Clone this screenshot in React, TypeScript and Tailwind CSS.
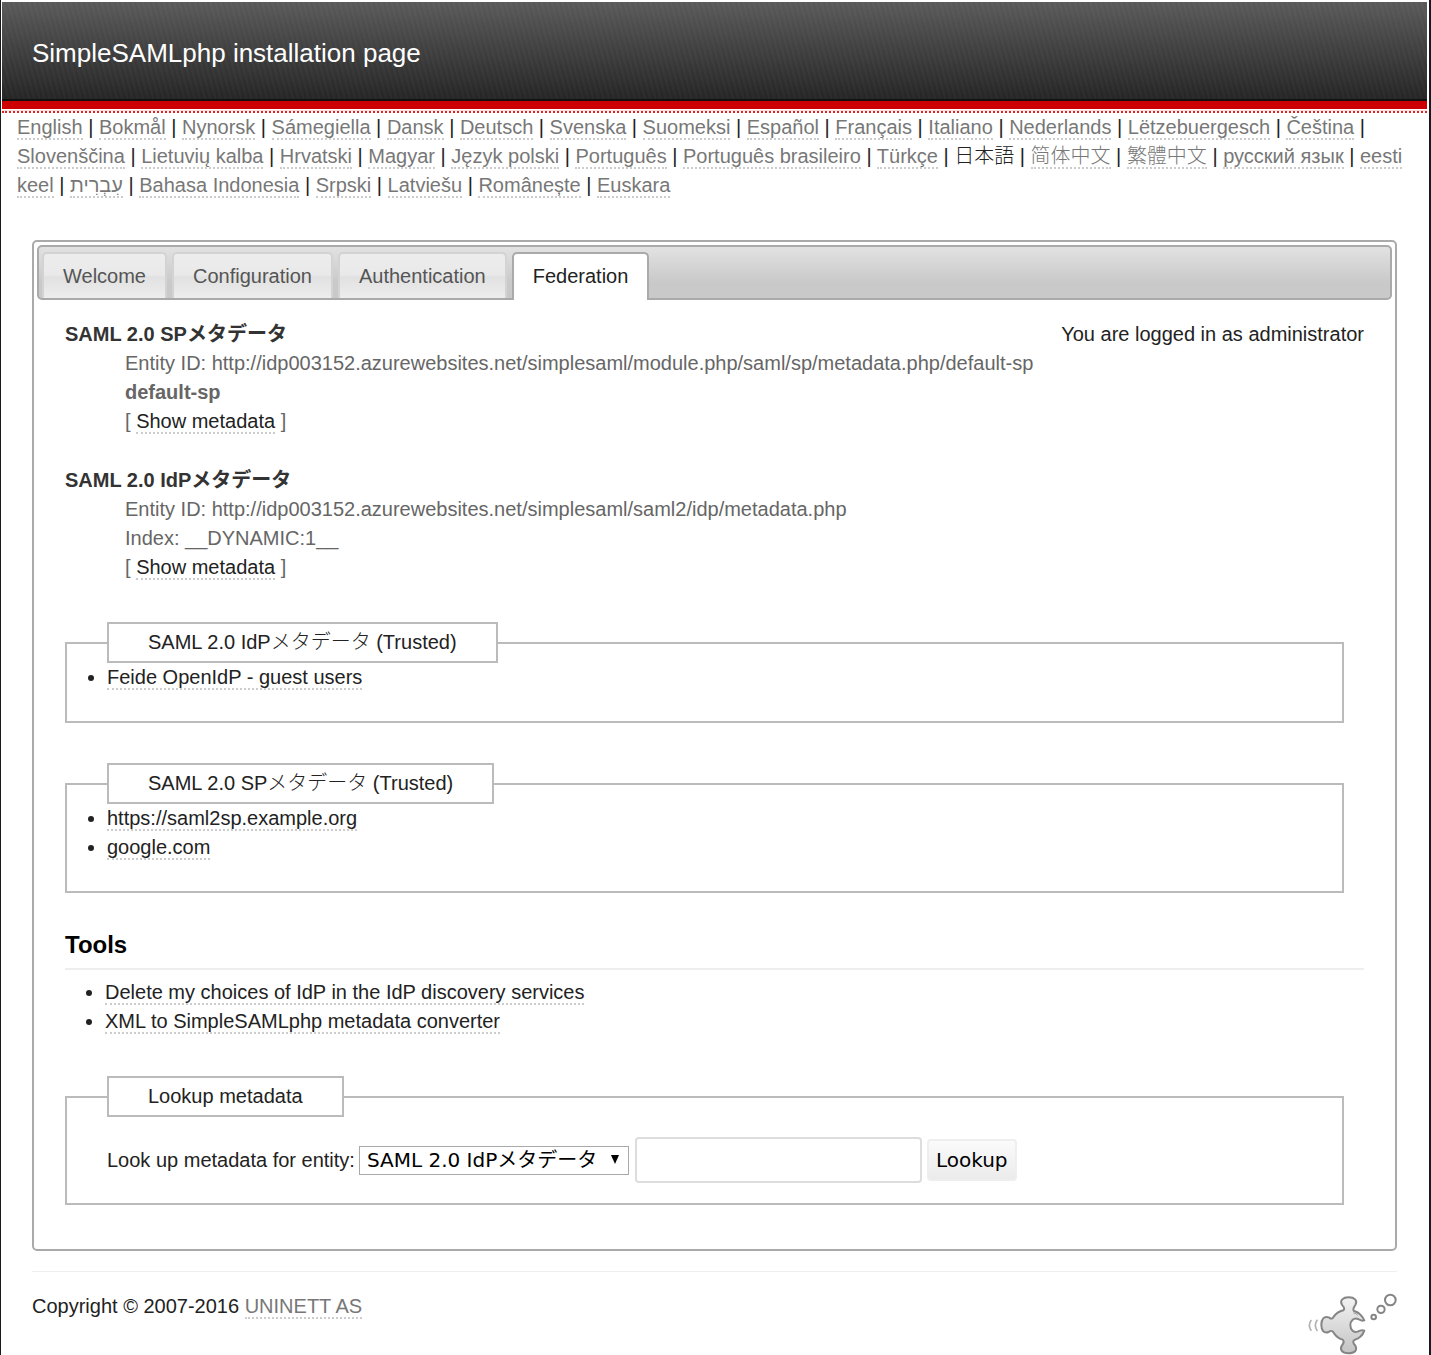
import type { ReactNode } from "react";

const languages: { name: string; current?: boolean }[] = [
  { name: "English" },
  { name: "Bokmål" },
  { name: "Nynorsk" },
  { name: "Sámegiella" },
  { name: "Dansk" },
  { name: "Deutsch" },
  { name: "Svenska" },
  { name: "Suomeksi" },
  { name: "Español" },
  { name: "Français" },
  { name: "Italiano" },
  { name: "Nederlands" },
  { name: "Lëtzebuergesch" },
  { name: "Čeština" },
  { name: "Slovenščina" },
  { name: "Lietuvių kalba" },
  { name: "Hrvatski" },
  { name: "Magyar" },
  { name: "Język polski" },
  { name: "Português" },
  { name: "Português brasileiro" },
  { name: "Türkçe" },
  { name: "日本語", current: true },
  { name: "简体中文" },
  { name: "繁體中文" },
  { name: "русский язык" },
  { name: "eesti keel" },
  { name: "עִבְרִית" },
  { name: "Bahasa Indonesia" },
  { name: "Srpski" },
  { name: "Latviešu" },
  { name: "Românește" },
  { name: "Euskara" },
];

const tabs = ["Welcome", "Configuration", "Authentication", "Federation"];

function DottedLink({ children, muted = false }: { children: ReactNode; muted?: boolean }) {
  return (
    <a
      href="#"
      className={
        muted
          ? "border-b-2 border-dotted border-[#cccccc] text-[#777777]"
          : "border-b-2 border-dotted border-[#cccccc] text-[#222222]"
      }
    >
      {children}
    </a>
  );
}

function Header() {
  return (
    <header>
      <div className="border-b-2 border-[#111111] bg-[repeating-linear-gradient(75deg,rgba(255,255,255,0.025)_0px,rgba(255,255,255,0.025)_2px,transparent_3px,transparent_5px),linear-gradient(to_bottom,#5a5a5a,#252525)] px-[30px] pt-[31px] pb-[26px]">
        <h1 className="text-[26px] leading-[40px] text-white">SimpleSAMLphp installation page</h1>
      </div>
      <div className="h-2 bg-[#cc0000]" />
      <div className="mt-px border-t border-[#fbdada]" />
      <div className="border-t-2 border-dotted border-[#dd2222]" />
    </header>
  );
}

function LanguageBar() {
  return (
    <nav aria-label="Languages" className="pr-5 pl-[15px]">
      {languages.map((l, i) => (
        <span key={l.name}>
          {l.current ? (
            <span>{l.name}</span>
          ) : (
            <DottedLink muted>
              {l.name.split(" ").map((word, w) => (
                <span key={word}>
                  {w > 0 ? " " : ""}
                  <span>{word}</span>
                </span>
              ))}
            </DottedLink>
          )}
          {i < languages.length - 1 ? " | " : ""}
        </span>
      ))}
    </nav>
  );
}

function TabBar() {
  return (
    <div
      role="tablist"
      className="flex gap-[5px] rounded-[5px] border-2 border-[#aaaaaa] bg-linear-to-b from-[#e2e2e2] to-[#c9c9c9] to-70% pt-[5px] pl-[3px]"
    >
      {tabs.map((t) =>
        t === "Federation" ? (
          <button
            key={t}
            role="tab"
            aria-selected="true"
            className="-mb-[2px] rounded-t-[5px] border-2 border-b-0 border-[#aaaaaa] bg-white px-[19px] pt-2 pb-[9px] text-[#222222]"
          >
            {t}
          </button>
        ) : (
          <button
            key={t}
            role="tab"
            aria-selected="false"
            className="rounded-t-[5px] border-2 border-b-0 border-[#d3d3d3] bg-[linear-gradient(to_bottom,#ededed_0%,#e9e9e9_48%,#e1e1e1_52%,#ededed_100%)] px-[19px] pt-2 pb-[7px] text-[#555555]"
          >
            {t}
          </button>
        ),
      )}
    </div>
  );
}

function MetadataEntry({ title, children }: { title: string; children: ReactNode }) {
  return (
    <dl className="mb-[30px]">
      <dt className="font-bold text-[#333333]">{title}</dt>
      <dd className="pl-[60px] text-[#666666]">
        {children}
        <div>
          [ <DottedLink>Show metadata</DottedLink> ]
        </div>
      </dd>
    </dl>
  );
}

function Group({ legend, children }: { legend: string; children: ReactNode }) {
  return (
    <fieldset className="mr-5 border-2 border-[#bbbbbb] px-10">
      <legend className="border-2 border-[#bbbbbb] px-[39px] py-1">{legend}</legend>
      {children}
    </fieldset>
  );
}

function LookupForm() {
  return (
    <form className="flex items-center py-5" onSubmit={(e) => e.preventDefault()}>
      <label htmlFor="mdset">Look up metadata for entity:</label>
      <div className="relative ml-1">
        <select
          id="mdset"
          className="block h-[29px] w-[270px] appearance-none border border-[#a9a9a9] bg-white pl-[7px] font-['DejaVu_Sans','Noto_Sans_CJK_JP',sans-serif] leading-[27px] font-normal text-black"
        >
          <option>SAML 2.0 IdPメタデータ</option>
          <option>SAML 2.0 SPメタデータ</option>
        </select>
        <svg
          aria-hidden="true"
          viewBox="0 0 8 9"
          className="pointer-events-none absolute top-[9px] right-[10px] h-[9px] w-2"
        >
          <path d="M0 0H8L4 9Z" fill="#000" />
        </svg>
      </div>
      <input
        type="text"
        aria-label="Entity ID"
        className="ml-[6px] h-[46px] w-[287px] rounded-[4px] border-2 border-[#dddddd] bg-white px-2"
      />
      <button
        type="submit"
        className="ml-[5px] h-[42px] rounded-[4px] border-2 border-[#eeeeee] bg-linear-to-b from-[#fbfbfb] to-[#ebebeb] px-[7px] font-['DejaVu_Sans',sans-serif] font-normal text-black"
      >
        Lookup
      </button>
    </form>
  );
}

function PuzzleLogo() {
  return (
    <svg viewBox="58 36 267 189" className="h-[63px] w-[89px]" role="img" aria-label="Puzzle piece">
      <defs>
        <linearGradient id="piece" x1="0" y1="0" x2="0" y2="1">
          <stop offset="0" stopColor="#f2f2f2" />
          <stop offset="1" stopColor="#c4c4c4" />
        </linearGradient>
      </defs>
      <path
        d="M164 91C168 87 167 82 161 76C151 60 164 52 180 52C197 52 208 61 200 75C195 82 191 88 196 93C211 97 221 108 227 121C219 124 214 121 208 117C196 112 185 122 185 136C185 150 196 159 207 155C214 151 219 149 227 152C222 166 211 176 197 180C191 184 194 190 200 197C207 211 198 220 179 220C160 220 152 209 160 196C166 189 167 184 162 179C149 175 141 168 135 158C130 151 127 151 120 156C105 162 98 150 98 134C98 118 106 107 120 112C127 118 131 117 135 110C142 100 152 94 164 91Z"
        fill="url(#piece)"
        stroke="#858585"
        strokeWidth="6"
        strokeLinejoin="round"
      />
      <path d="M194 99Q202 99 207 106" fill="none" stroke="#999999" strokeWidth="3" />
      <g fill="none" stroke="#858585">
        <circle cx="255" cy="111" r="7" strokeWidth="6" />
        <circle cx="277" cy="88" r="11" strokeWidth="6" />
        <circle cx="305" cy="60" r="16" strokeWidth="6" />
        <path d="M86 119Q74 136 86 153M68 120Q56 136 68 152" stroke="#b0b0b0" strokeWidth="5" />
      </g>
    </svg>
  );
}

export default function App() {
  return (
    <div className="min-h-screen border-r-2 border-l border-[#17191c] bg-white pt-[2px] pr-[2px] pl-px font-['Liberation_Sans','Noto_Sans_CJK_JP',sans-serif] text-[20px] leading-[29px] font-light text-[#222222]">
      <Header />
      <LanguageBar />
      <main className="mx-[30px] mt-10 rounded-[5px] border-2 border-[#aaaaaa] p-[3px] pb-[44px]">
        <TabBar />
        <div role="tabpanel" className="px-7 pt-5">
          <p className="float-right">You are logged in as administrator</p>
          <MetadataEntry title="SAML 2.0 SPメタデータ">
            <div>Entity ID: http://idp003152.azurewebsites.net/simplesaml/module.php/saml/sp/metadata.php/default-sp</div>
            <div className="font-bold">default-sp</div>
          </MetadataEntry>
          <MetadataEntry title="SAML 2.0 IdPメタデータ">
            <div>Entity ID: http://idp003152.azurewebsites.net/simplesaml/saml2/idp/metadata.php</div>
            <div>Index: __DYNAMIC:1__</div>
          </MetadataEntry>
          <div className="flex flex-col gap-10 pt-[10px]">
            <Group legend="SAML 2.0 IdPメタデータ (Trusted)">
              <ul className="mb-[29px] list-disc">
                <li>
                  <DottedLink>Feide OpenIdP - guest users</DottedLink>
                </li>
              </ul>
            </Group>
            <Group legend="SAML 2.0 SPメタデータ (Trusted)">
              <ul className="mb-[29px] list-disc">
                <li>
                  <DottedLink>https://saml2sp.example.org</DottedLink>
                </li>
                <li>
                  <DottedLink>google.com</DottedLink>
                </li>
              </ul>
            </Group>
          </div>
          <h2 className="mt-8 border-b-2 border-[#eeeeee] pb-[3px] text-[24px] leading-[40px] font-bold text-black">
            Tools
          </h2>
          <ul className="mt-2 mb-10 list-disc pl-10">
            <li>
              <DottedLink>Delete my choices of IdP in the IdP discovery services</DottedLink>
            </li>
            <li>
              <DottedLink>XML to SimpleSAMLphp metadata converter</DottedLink>
            </li>
          </ul>
          <Group legend="Lookup metadata">
            <LookupForm />
          </Group>
        </div>
      </main>
      <footer className="mx-[30px] mt-5 flex items-start justify-between border-t border-[#eeeeee] pt-5">
        <p>
          Copyright © 2007-2016 <DottedLink muted>UNINETT AS</DottedLink>
        </p>
        <PuzzleLogo />
      </footer>
    </div>
  );
}
